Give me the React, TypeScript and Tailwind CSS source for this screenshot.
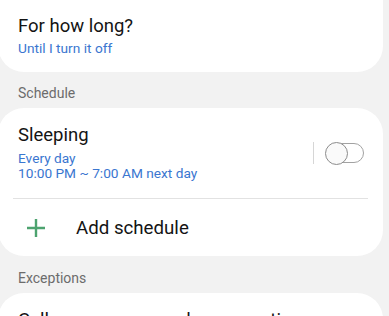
import React from "react";

export default function App() {
  const font = { fontFamily: "Roboto, 'Noto Sans', sans-serif" };
  return (
    <div className="w-[389px] h-[316px] overflow-hidden bg-[#f2f2f2]" style={font}>
      <div className="w-[385px] -ml-[2px] bg-white rounded-b-[26px] pl-[20px] pt-[14px] pb-[15px]">
        <div className="text-[18.5px] leading-[24px] text-[#141414]">For how long?</div>
        <div className="text-[13.7px] leading-[18px] text-[#3a76d0] mt-[1px]">Until I turn it off</div>
      </div>
      <div className="pl-[18px] pt-[11px] pb-[5px] text-[14px] leading-[20px] text-[#6c6c6c]">Schedule</div>
      <div className="w-[385px] -ml-[2px] bg-white rounded-[26px]">
        <div className="flex items-center pl-[20px] pr-[19px] pt-[15px] pb-[17px]">
          <div className="flex-1">
            <div className="text-[18.5px] leading-[24px] text-[#141414]">Sleeping</div>
            <div className="text-[13.7px] leading-[15px] text-[#3a76d0] mt-[4px]">Every day</div>
            <div className="text-[13.7px] leading-[15px] text-[#3a76d0]">10:00 PM ~ 7:00 AM next day</div>
          </div>
          <div className="w-[1.5px] h-[22px] bg-[#d6d6d6] mr-[11px] mt-[2px]" />
          <div className="relative w-[39px] h-[23px] mt-[2px]">
            <div className="absolute left-[1px] top-[1.5px] w-[38px] h-[20px] rounded-full border-[1.5px] border-[#a2a2a2]" />
            <div className="absolute left-0 top-0 w-[23px] h-[23px] rounded-full border-[1.5px] border-[#8c8c8c] bg-[#fafafa]" />
          </div>
        </div>
        <div className="mx-[15px] h-px bg-[#e2e2e2]" />
        <div className="flex items-center h-[57px]">
          <div className="ml-[29px] w-[18px] h-[18px] flex">
            <svg width="18" height="18" viewBox="0 0 18 18">
              <path d="M9 0V18M0 9H18" stroke="#4da36f" strokeWidth="2.4" />
            </svg>
          </div>
          <div className="ml-[31px] text-[18.7px] leading-[24px] text-[#141414]">Add schedule</div>
        </div>
      </div>
      <div className="pl-[18px] pt-[12px] pb-[5px] text-[14px] leading-[20px] text-[#6c6c6c]">Exceptions</div>
      <div className="w-[385px] -ml-[2px] bg-white rounded-t-[26px] h-[60px] pl-[20px] pt-[15px]">
        <div className="text-[18.5px] leading-[24px] text-[#141414]">Calls, messages, and conversations</div>
      </div>
    </div>
  );
}
